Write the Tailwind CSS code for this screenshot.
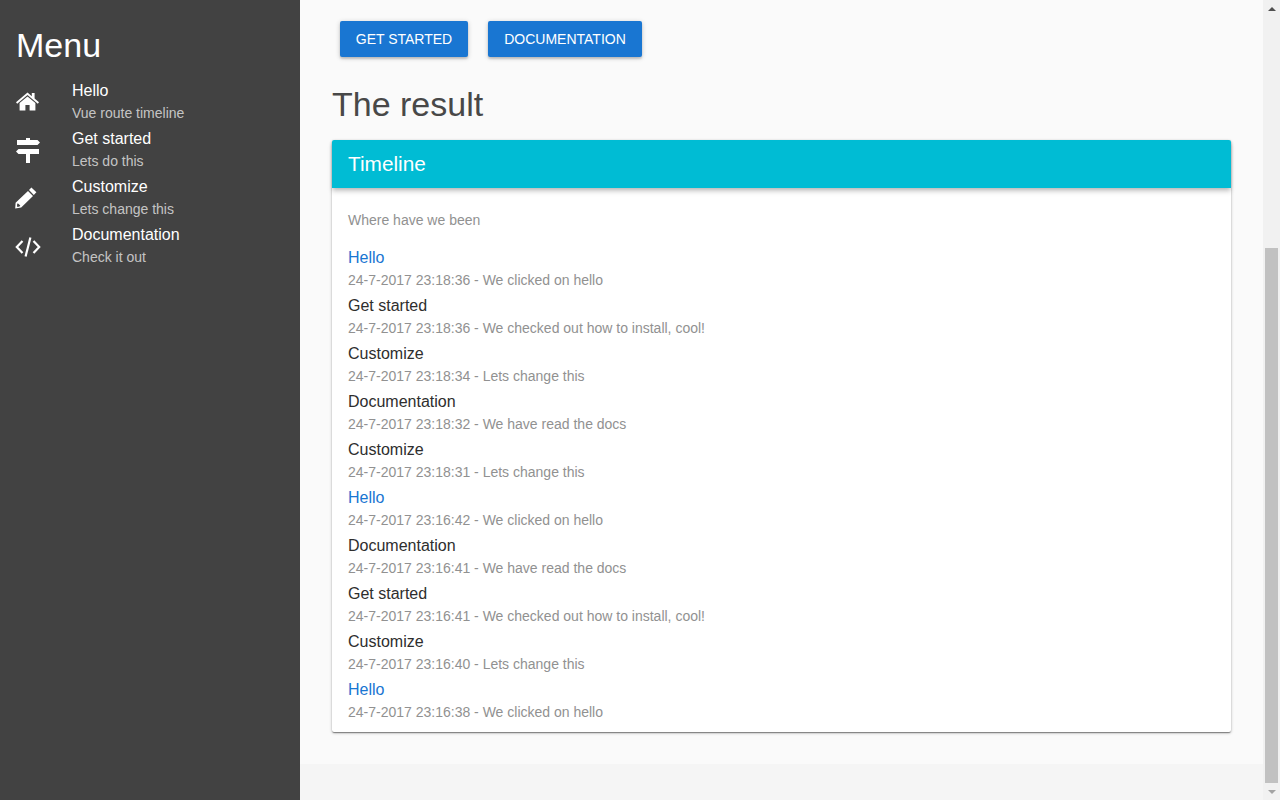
<!DOCTYPE html>
<html lang="en">
<head>
    <meta charset="UTF-8">
    <title>Vue route timeline</title>
    <script src="https://cdn.jsdelivr.net/npm/@tailwindcss/browser@4"></script>
</head>
<body class="h-[800px] overflow-hidden bg-[#f5f5f5] font-['Liberation_Sans',Arial,sans-serif]">
    <div class="flex h-[800px]">
        <!-- sidebar -->
        <aside class="w-[300px] shrink-0 bg-[#424242] text-white">
            <h1 class="h-[78px] pl-4 pt-[25px] text-[34px] leading-10 font-normal">Menu</h1>
            <nav>
                <a class="flex h-12">
                    <span class="flex w-[72px] items-center pl-4 pb-[1px]">
                        <svg class="w-[23px] h-[19px]" viewBox="0 0 23 19" fill="#fff"><path d="M11.5 0.6 L15.8 4.2 V1 H18.6 V6.6 L23 10.3 L21.8 11.7 L11.5 3.1 L1.2 11.7 L0 10.3 Z"/><path d="M11.5 4.6 L19.4 11.1 V18.6 H13.6 V13 H9.4 V18.6 H3.6 V11.1 Z"/></svg>
                    </span>
                    <span class="block">
                        <span class="block text-base leading-[26px]">Hello</span>
                        <span class="block text-sm leading-[18px] text-white/70">Vue route timeline</span>
                    </span>
                </a>
                <a class="flex h-12">
                    <span class="flex w-[72px] items-center pl-4">
                        <svg class="w-6 h-[25px]" viewBox="0 0 24 25" fill="#fff"><path d="M10 0 H14 V2 H21.5 L24 4.5 L21.5 7 H1 V2 H10 Z"/><path d="M2.5 11 H23 V16 H14 V25 H10 V16 H2.5 L0 13.5 Z"/></svg>
                    </span>
                    <span class="block">
                        <span class="block text-base leading-[26px]">Get started</span>
                        <span class="block text-sm leading-[18px] text-white/70">Lets do this</span>
                    </span>
                </a>
                <a class="flex h-12">
                    <span class="flex w-[72px] items-center pl-[15px] pb-[1px]">
                        <svg class="w-[22px] h-[22px]" viewBox="0 0 22 22" fill="#fff"><path fill-rule="evenodd" d="M16.4 0.4 L21.4 5.2 L18.8 7.9 L14 3 Z M13 4 L18 8.9 L6.2 20.6 L0.2 21.6 L0.6 15.8 Z M2.2 16.6 L2 19.8 L4.2 19.7 L5.3 18.6 L3.4 16.7 Z"/></svg>
                    </span>
                    <span class="block">
                        <span class="block text-base leading-[26px]">Customize</span>
                        <span class="block text-sm leading-[18px] text-white/70">Lets change this</span>
                    </span>
                </a>
                <a class="flex h-12">
                    <span class="flex w-[72px] items-center pl-[15px] pt-[2px]">
                        <svg class="w-[26px] h-5" viewBox="0 0 26 20" fill="none" stroke="#fff" stroke-width="2.2"><path d="M7.5 4 L1.8 10 L7.5 16"/><path d="M18.5 4 L24.2 10 L18.5 16"/><path d="M15.4 0.6 L10.6 19.4"/></svg>
                    </span>
                    <span class="block">
                        <span class="block text-base leading-[26px]">Documentation</span>
                        <span class="block text-sm leading-[18px] text-white/70">Check it out</span>
                    </span>
                </a>
            </nav>
        </aside>

        <!-- main content -->
        <main class="w-[963px] shrink-0">
            <div class="h-[764px] bg-[#fafafa] px-8 pt-[21px]">
                <div class="flex gap-5 pl-2">
                    <button class="h-9 w-[128px] rounded-[2px] bg-[#1976d2] text-sm text-white uppercase shadow-[0_2px_2px_rgba(0,0,0,0.14),0_1px_5px_rgba(0,0,0,0.2)]">Get started</button>
                    <button class="h-9 w-[154px] rounded-[2px] bg-[#1976d2] text-sm text-white uppercase shadow-[0_2px_2px_rgba(0,0,0,0.14),0_1px_5px_rgba(0,0,0,0.2)]">Documentation</button>
                </div>
                <h2 class="mt-[27px] h-10 text-[34px] leading-10 font-normal text-[#484848]">The result</h2>
                <section class="mt-4 w-[899px] h-[592px] rounded-[2px] bg-white shadow-[0_1px_3px_rgba(0,0,0,0.3),0_1px_1px_rgba(0,0,0,0.2),0_2px_1px_-1px_rgba(0,0,0,0.2)]">
                    <div class="relative h-12 rounded-t-[2px] bg-[#00bcd4] px-4 text-[20.8px] leading-12 text-white shadow-[0_2px_4px_-1px_rgba(0,0,0,0.2),0_4px_5px_rgba(0,0,0,0.14)]">Timeline</div>
                    <div class="px-4">
                        <p class="pt-[22px] pb-[15px] text-sm leading-5 text-[#919191]">Where have we been</p>
                        <ul>
                            <li class="h-12"><div class="text-base leading-[26px] text-[#1976d2]">Hello</div><div class="text-sm leading-[18px] text-[#919191]">24-7-2017 23:18:36 - We clicked on hello</div></li>
                            <li class="h-12"><div class="text-base leading-[26px] text-[#2e2e2e]">Get started</div><div class="text-sm leading-[18px] text-[#919191]">24-7-2017 23:18:36 - We checked out how to install, cool!</div></li>
                            <li class="h-12"><div class="text-base leading-[26px] text-[#2e2e2e]">Customize</div><div class="text-sm leading-[18px] text-[#919191]">24-7-2017 23:18:34 - Lets change this</div></li>
                            <li class="h-12"><div class="text-base leading-[26px] text-[#2e2e2e]">Documentation</div><div class="text-sm leading-[18px] text-[#919191]">24-7-2017 23:18:32 - We have read the docs</div></li>
                            <li class="h-12"><div class="text-base leading-[26px] text-[#2e2e2e]">Customize</div><div class="text-sm leading-[18px] text-[#919191]">24-7-2017 23:18:31 - Lets change this</div></li>
                            <li class="h-12"><div class="text-base leading-[26px] text-[#1976d2]">Hello</div><div class="text-sm leading-[18px] text-[#919191]">24-7-2017 23:16:42 - We clicked on hello</div></li>
                            <li class="h-12"><div class="text-base leading-[26px] text-[#2e2e2e]">Documentation</div><div class="text-sm leading-[18px] text-[#919191]">24-7-2017 23:16:41 - We have read the docs</div></li>
                            <li class="h-12"><div class="text-base leading-[26px] text-[#2e2e2e]">Get started</div><div class="text-sm leading-[18px] text-[#919191]">24-7-2017 23:16:41 - We checked out how to install, cool!</div></li>
                            <li class="h-12"><div class="text-base leading-[26px] text-[#2e2e2e]">Customize</div><div class="text-sm leading-[18px] text-[#919191]">24-7-2017 23:16:40 - Lets change this</div></li>
                            <li class="h-12"><div class="text-base leading-[26px] text-[#1976d2]">Hello</div><div class="text-sm leading-[18px] text-[#919191]">24-7-2017 23:16:38 - We clicked on hello</div></li>
                        </ul>
                    </div>
                </section>
            </div>
        </main>

        <!-- scrollbar -->
        <div class="flex w-[17px] shrink-0 flex-col items-center bg-[#f1f1f1]">
            <div class="flex h-[17px] items-center justify-center">
                <svg class="w-2 h-1" viewBox="0 0 8 4" fill="#505050"><path d="M4 0 L8 4 H0 Z"/></svg>
            </div>
            <div class="mt-[231px] h-[535px] w-[13px] bg-[#c1c1c1]"></div>
            <div class="flex h-[17px] items-center justify-center">
                <svg class="w-2 h-1" viewBox="0 0 8 4" fill="#a3a3a3"><path d="M0 0 H8 L4 4 Z"/></svg>
            </div>
        </div>
    </div>
</body>
</html>
